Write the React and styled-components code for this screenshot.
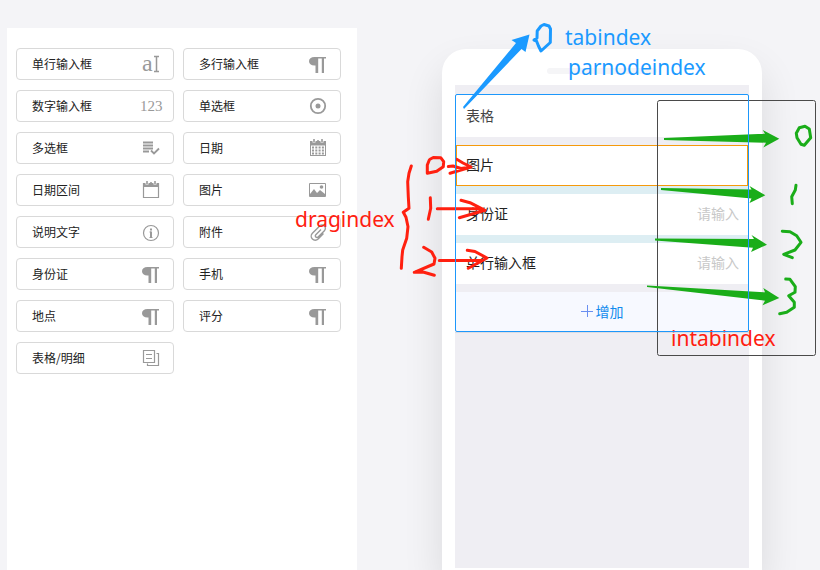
import React from "react";
import styled, { createGlobalStyle } from "styled-components";

const GlobalStyle = createGlobalStyle`
  * { box-sizing: border-box; }
  body {
    margin: 0;
    background: #f4f4f7;
    color: #222;
    font-family: "Noto Sans CJK SC", sans-serif;
    font-size: 12px;
  }
  button, input { font: inherit; color: inherit; }
`;

const Page = styled.div`
  display: flex;
  min-height: 100vh;
  overflow: hidden;
`;

const Palette = styled.aside`
  flex: none;
  width: 350px;
  margin: 28px 0 0 7px;
  padding: 20px 16px 20px 9px;
  background: #fff;
  display: grid;
  grid-template-columns: 1fr 1fr;
  gap: 10px 9px;
  align-content: start;
`;

const PaletteItem = styled.button`
  display: flex;
  align-items: center;
  justify-content: space-between;
  height: 32px;
  padding: 0 10px 0 15px;
  background: #fff;
  border: 1px solid #d9d9d9;
  border-radius: 4px;
  line-height: 20px;
  cursor: grab;
`;

const Glyph = styled.svg`
  flex: none;
  width: 24px;
  height: 24px;
  overflow: visible;
  fill: none;
  stroke: #999;
  stroke-width: 1.5;

  text {
    fill: #999;
    stroke: none;
    font-family: "Liberation Serif", serif;
  }
`;

const Stage = styled.main`
  flex: 1;
  display: flex;
  justify-content: center;
  padding: 49px 0 0 27px;
`;

const Phone = styled.section`
  position: relative;
  flex: none;
  display: flex;
  flex-direction: column;
  width: 320px;
  padding: 0 13px 2px;
  background: #fff;
  border-radius: 24px 24px 0 0;
  box-shadow: 0 20px 40px rgba(0, 0, 0, 0.11);
`;

const Speaker = styled.div`
  align-self: center;
  width: 110px;
  height: 6px;
  margin: 19px 0 11px;
  border-radius: 3px;
  background: #f5f5f7;
`;

const Screen = styled.div`
  flex: 1;
  padding-top: 9px;
  background: #efeef3;
`;

const TableGroup = styled.div`
  position: relative;
  display: flex;
  flex-direction: column;
  padding: 1px;
  border-bottom: 1px solid #dcdce2;

  &::after {
    content: "";
    position: absolute;
    z-index: 3;
    inset: 0;
    border: 1px solid #1d97fb;
    border-radius: 2px;
    pointer-events: none;
  }
`;

const Row = styled.div`
  display: flex;
  align-items: center;
  justify-content: space-between;
  height: ${(p) => (p.$tall ? 42 : 41)}px;
  padding: 0 9px 3px ${(p) => (p.$selected ? 9 : 10)}px;
  background: #fff;
  border: ${(p) => (p.$selected ? "1px solid #f59a0c" : "0")};
  font-size: 14px;
  line-height: 20px;
  color: ${(p) => (p.$tall ? "#444" : "#222")};
`;

const DropSlot = styled.div`
  height: 8px;
  background: ${(p) => (p.$active ? "#ddeef3" : "#efeef3")};
`;

const RowInput = styled.input`
  width: 100px;
  padding: 0;
  border: 0;
  background: none;
  text-align: right;
  outline: none;

  &::placeholder { color: #c8c8c8; opacity: 1; }
`;

const AddButton = styled.button`
  height: 39px;
  padding: 0 0 2px;
  border: 0;
  background: #f7f9ff;
  color: #118bee;
  font-size: 14px;
  line-height: 20px;
  display: flex;
  align-items: center;
  justify-content: center;
  gap: 3px;

  svg { width: 12px; height: 12px; stroke: #6a8ff0; }
`;

const Notes = styled.div`
  position: absolute;
  z-index: 2;
  left: -442px;
  top: -49px;
  width: 820px;
  height: 570px;
  pointer-events: none;
`;

const Ink = styled.svg`
  position: absolute;
  inset: 0;
  fill: none;
  stroke-width: 3;
  stroke-linecap: round;
  stroke-linejoin: round;
`;

const Note = styled.span`
  position: absolute;
  left: ${(p) => p.$x}px;
  top: ${(p) => p.$y}px;
  color: ${(p) => p.$color};
  font-family: "Noto Sans", sans-serif;
  font-size: 21px;
  line-height: 28px;
  white-space: nowrap;
`;

const BLUE = "#1b9aff";
const RED = "#ff2010";
const GREEN = "#1aad19";

const icons = {
  text: (
    <>
      <text x="3" y="19" fontSize="24">a</text>
      <path d="M15 4.500h5M15 19.500h5M17.500 4.500v15" strokeWidth="1.500" />
    </>
  ),
  number: <text x="1" y="17" fontSize="15">123</text>,
  paragraph: (
    <path
      d="M8.500 5H20v1.500h-2V21h-2.200V6.500H12.200V21H9.500v-7.500h-1C5 13.500 3 12 3 9.300S5 5 8.500 5Z"
      fill="#999"
      stroke="none"
    />
  ),
  radio: (
    <>
      <circle cx="12" cy="12" r="7.200" strokeWidth="1.800" />
      <circle cx="12" cy="12" r="2.500" fill="#999" stroke="none" />
    </>
  ),
  checks: (
    <path d="M4 6.500h10M4 9.500h10M4 12.500h10M4 15.500h6M12 14.500l3 3 5-5" strokeWidth="1.800" />
  ),
  calendar: (
    <>
      <path d="M4.500 5.500h15v14h-15Z" strokeWidth="1.200" />
      <path d="M4 5h16v4H4Z" fill="#999" stroke="none" />
      <path d="M8 3v3.500M16 3v3.500" stroke="#fff" strokeWidth="3" />
      <path d="M8 3v3M16 3v3M12 4v2" strokeWidth="1.600" />
    </>
  ),
  dates: (
    <>
      <path d="M4 5h16v15H4Z" fill="#999" stroke="none" />
      <path d="M5 9.500h14v9.500H5Z" fill="#fff" stroke="none" />
      <path d="M6 11.500h12M6 14.500h12M6 17.500h12" strokeWidth="2" strokeDasharray="2 1.300" />
      <path d="M8 3v3.500M16 3v3.500" stroke="#fff" strokeWidth="3" />
      <path d="M8 3v3M16 3v3M12 4v2" strokeWidth="1.600" />
    </>
  ),
  image: (
    <>
      <path d="M3.500 5.500h16v13h-16Z" strokeWidth="1" />
      <path d="M4 16l4-5 3 4 3-3 5 4v2.500H4Z" fill="#999" stroke="none" />
      <circle cx="15.500" cy="9" r="1.800" fill="#999" stroke="none" />
    </>
  ),
  info: (
    <>
      <circle cx="12" cy="13" r="7.500" strokeWidth="1.200" />
      <path d="M12 8.500v2M12 11.500v6" strokeWidth="2" />
      <path d="M10.500 12H12M10.500 17.500h3" strokeWidth="1" />
    </>
  ),
  clip: (
    <path
      d="M15 9.500l-5.200 5.200a1.600 1.600 0 0 0 2.300 2.300l6.300-6.300a3.300 3.300 0 0 0-4.700-4.700l-7.300 7.300a4 4 0 0 0 5.700 5.700l5.400-5.400"
      strokeWidth="1.400"
    />
  ),
  copy: (
    <path d="M4.500 4.500h11v12h-11ZM7 8.500h6M7 12.500h6M17.500 7.500h2v12h-11v-2" strokeWidth="1.200" />
  ),
};

const fields = [
  ["单行输入框", "text"],
  ["多行输入框", "paragraph"],
  ["数字输入框", "number"],
  ["单选框", "radio"],
  ["多选框", "checks"],
  ["日期", "dates"],
  ["日期区间", "calendar"],
  ["图片", "image"],
  ["说明文字", "info"],
  ["附件", "clip"],
  ["身份证", "paragraph"],
  ["手机", "paragraph"],
  ["地点", "paragraph"],
  ["评分", "paragraph"],
  ["表格/明细", "copy"],
];

function Annotations() {
  return (
    <Notes>
      <Ink width="820" height="570" viewBox="0 0 820 570">
        <rect x="657.5" y="100.5" width="158" height="255" rx="2" stroke="#4a4a4a" strokeWidth="1" />
        <g fill={BLUE}>
          <path d="M463 107L516 43L511.500 40L529.500 34.500L525.500 52L521.500 49L464 109Z" />
        </g>
        <path
          stroke={BLUE}
          d="M541 26L544 24.500L549 26L550.500 29L550.300 42.500L541 51L538.500 46L536.500 41L534 40L537 38L537.200 31L541 26"
        />
        <g fill={GREEN}>
          <path d="M664 138L765 133.700L762.700 130L779.300 138.700L763.300 147.500L766 142.700L664 140Z" />
          <path d="M661 188L751.500 189.500L749.500 186L765.300 195.300L749.500 203L751.500 198.500L661 190Z" />
          <path d="M655 238.500L754 239L751.500 235L767 244.700L751 252L753 247.700L655 240.500Z" />
          <path d="M647 285.500L765 292.300L763.300 288L779.300 298L762.500 305.300L765 300.700L647 287Z" />
        </g>
        <g stroke={GREEN}>
          <path d="M805 126.300L809.300 129L810.700 137.700L804.300 145.300L801 144.300L797 137.700L796.300 133.300L799.300 127.700Z" />
          <path d="M796 185.300L795.300 190L791.700 196.700L792.300 203.700" />
          <path d="M782.300 231.300L790 231.700L796.700 235.700L801 242.300L795 250L783.700 254.300L792.300 257.700" />
          <path d="M785.700 279L790 279.300L795.300 286.700L795 292.300L788.700 295.700L794.300 302.300L794.300 307.300L786.700 312.300L779.700 313.700" />
        </g>
        <g stroke={RED}>
          <path d="M411.300 166L409 173.300L407.700 181.700L408.300 196.700L409 208.300L403.300 212.300L406 217.300L408 226.700L406.700 238.300L402.700 250L402 256.700L401.300 268.300" />
          <path d="M430 159.300L433.300 157.500L440.700 157.700L443.700 161.700L443.300 166.700L436.700 171.300L427.300 173.300L427.300 165L429.300 160" />
          <path d="M448.300 166.500L453 166L461 168.500L471 167M456.700 159.300L463 163L471 167L450 173.300" />
          <path d="M430.300 197.700L430.700 208.300L428.300 219.300" />
          <path d="M437.300 208.700H480M461 200.300L470 202.700L485 210.300L459.300 217.700" />
          <path d="M423.700 247.300L431.700 252L435 258.300L434 264L414.300 272.300L423 272L434.300 275.300" />
          <path d="M439.300 260.500H481M467.300 250.300L475 251.500L487 258L468.300 268.300" />
        </g>
      </Ink>
      <Note $x={565} $y={23} $color={BLUE}>tabindex</Note>
      <Note $x={568} $y={53} $color={BLUE}>parnodeindex</Note>
      <Note $x={295} $y={205} $color={RED}>dragindex</Note>
      <Note $x={671} $y={324} $color={RED}>intabindex</Note>
    </Notes>
  );
}

export default function App() {
  return (
    <>
      <GlobalStyle />
      <Page>
        <Palette>
          {fields.map(([label, icon]) => (
            <PaletteItem key={label} type="button">
              {label}
              <Glyph viewBox="0 0 24 24" aria-hidden="true">{icons[icon]}</Glyph>
            </PaletteItem>
          ))}
        </Palette>
        <Stage>
          <Phone>
            <Speaker />
            <Screen>
              <TableGroup>
                <Row $tall>表格</Row>
                <DropSlot />
                <Row $selected>图片</Row>
                <DropSlot $active />
                <Row>
                  <label htmlFor="id-card">身份证</label>
                  <RowInput id="id-card" placeholder="请输入" />
                </Row>
                <DropSlot $active />
                <Row>
                  <label htmlFor="single-line">单行输入框</label>
                  <RowInput id="single-line" placeholder="请输入" />
                </Row>
                <DropSlot />
                <AddButton type="button">
                  <svg viewBox="0 0 12 12" aria-hidden="true">
                    <path d="M0 6.500h12M6.500 0v12" />
                  </svg>
                  增加
                </AddButton>
              </TableGroup>
            </Screen>
            <Annotations />
          </Phone>
        </Stage>
      </Page>
    </>
  );
}
